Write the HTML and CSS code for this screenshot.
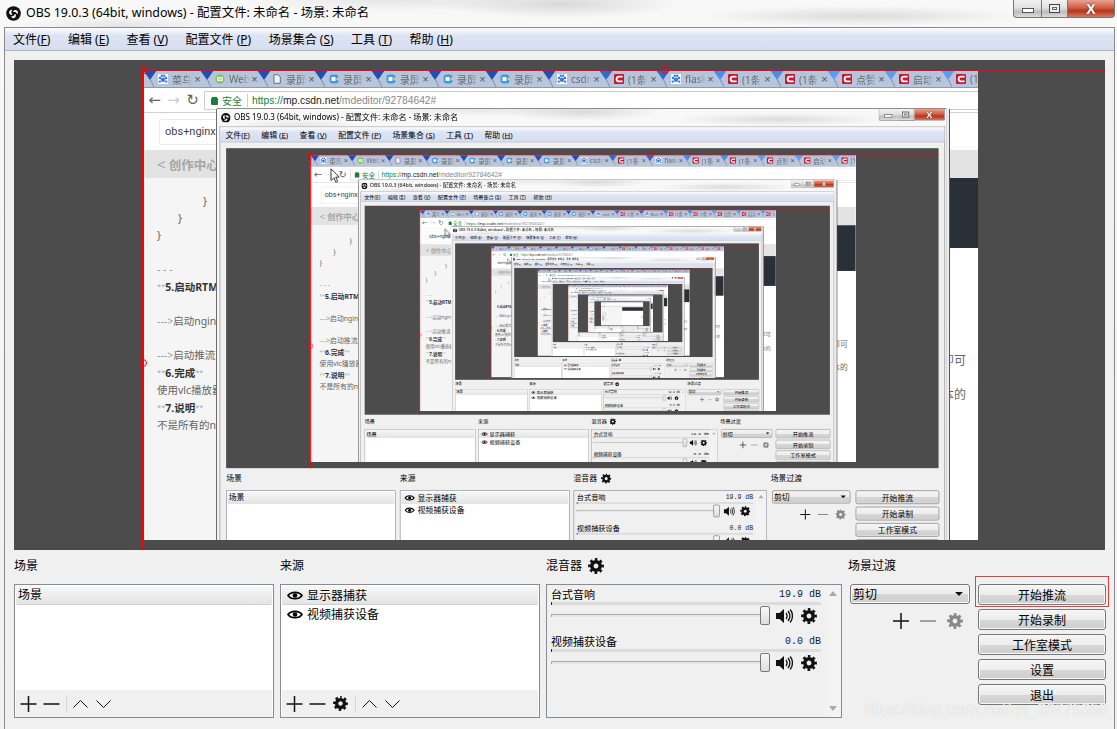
FILE: index.html
```html
<!DOCTYPE html>
<html lang="zh-CN">
<head>
<meta charset="utf-8">
<title>OBS 19.0.3</title>
<link rel="stylesheet" href="styles.css">
</head>
<body>
<svg class="defs" width="0" height="0" aria-hidden="true">
  <symbol id="i-gear" viewBox="-8 -8 16 16">
    <circle r="4.2" fill="none" stroke="currentColor" stroke-width="3.6"/>
    <circle r="6.6" fill="none" stroke="currentColor" stroke-width="2.6" stroke-dasharray="2.7 2.48" stroke-dashoffset="1.35" transform="rotate(-90)"/>
  </symbol>
  <symbol id="i-plus" viewBox="0 0 16 16"><path d="M8 0v16M0 8h16" stroke="currentColor" stroke-width="1.5" fill="none"/></symbol>
  <symbol id="i-minus" viewBox="0 0 16 16"><path d="M0 8h16" stroke="currentColor" stroke-width="1.5" fill="none"/></symbol>
  <symbol id="i-up" viewBox="0 0 16 10"><path d="M1 8.5 8 1.5l7 7" stroke="currentColor" stroke-width="1" fill="none"/></symbol>
  <symbol id="i-down" viewBox="0 0 16 10"><path d="M1 1.5l7 7 7-7" stroke="currentColor" stroke-width="1" fill="none"/></symbol>
  <symbol id="i-eye" viewBox="0 0 16 11">
    <path d="M1 5.5C4 1.2 12 1.2 15 5.5 12 9.8 4 9.8 1 5.5Z" fill="none" stroke="currentColor" stroke-width="1.7"/>
    <circle cx="8" cy="5.5" r="2.3" fill="currentColor"/>
  </symbol>
  <symbol id="i-speaker" viewBox="0 0 17 16">
    <path d="M0 5h3.5L8 1v14l-4.5-4H0Z" fill="currentColor"/>
    <path d="M10 5c1.3 1.8 1.3 4.2 0 6M12 3c2.3 3 2.3 7 0 10M14.2 1.5c3 3.8 3 9.2 0 13" fill="none" stroke="currentColor" stroke-width="1.3"/>
  </symbol>
  <symbol id="i-logo" viewBox="-8 -8 16 16">
    <circle r="7.8" fill="#111"/>
    <g fill="#fff">
      <path d="M-.6-1.6A2.7 2.7 0 1 1 4 .8 4 4 0 0 0-.6-1.6Z"/>
      <path d="M-.6-1.6A2.7 2.7 0 1 1 4 .8 4 4 0 0 0-.6-1.6Z" transform="rotate(120)"/>
      <path d="M-.6-1.6A2.7 2.7 0 1 1 4 .8 4 4 0 0 0-.6-1.6Z" transform="rotate(240)"/>
    </g>
  </symbol>
  <symbol id="f-paw" viewBox="0 0 10 10">
    <rect width="10" height="10" fill="#fff"/>
    <g fill="#3a7be0"><circle cx="5" cy="5.8" r="2.2"/><circle cx="2" cy="4" r="1.3"/><circle cx="8" cy="4" r="1.3"/><circle cx="3.8" cy="1.8" r="1.2"/><circle cx="6.2" cy="1.8" r="1.2"/><circle cx="1.8" cy="7.6" r="1.2"/><circle cx="8.2" cy="7.6" r="1.2"/></g>
  </symbol>
  <symbol id="f-web" viewBox="0 0 10 10">
    <circle cx="5" cy="5" r="4.6" fill="#7cc24a"/><rect x="2.2" y="2.8" width="5.6" height="4.4" fill="#fff"/><path d="M3 4.2h4M3 5.8h4" stroke="#7cc24a" stroke-width=".7"/>
  </symbol>
  <symbol id="f-doc" viewBox="0 0 10 10"><path d="M2 .7h4l2.3 2.4v6.2H2Z" fill="#eef2f8" stroke="#555" stroke-width=".8"/></symbol>
  <symbol id="f-rec" viewBox="0 0 10 10">
    <rect x=".5" y=".5" width="9" height="9" rx="3" fill="#3f9be8"/><path d="M2.5 3h4v4h-4Z" fill="#fff"/><path d="M7 5 9.6 3v4Z" fill="#ffd24a"/>
  </symbol>
  <symbol id="f-c" viewBox="0 0 10 10">
    <rect width="10" height="10" rx="1" fill="#c8182f"/><path d="M8.6 2.6H5A2.4 2.4 0 0 0 5 7.4h3.6" fill="none" stroke="#fff" stroke-width="1.9"/>
  </symbol>
</svg>

<div class="screen">
  <header class="titlebar">
    <svg class="logo"><use href="#i-logo"/></svg>
    <span class="title-text">OBS 19.0.3 (64bit, windows) - 配置文件: 未命名 - 场景: 未命名</span>
    <div class="controls">
      <span class="ctl ctl-min"><i class="glyph-min"></i></span>
      <span class="ctl ctl-max"><i class="glyph-max"></i></span>
      <span class="ctl ctl-close">X</span>
    </div>
  </header>
  <div class="window">
    <nav class="menubar">
      <span>文件(<u>F</u>)</span>
      <span>编辑 (<u>E</u>)</span>
      <span>查看 (<u>V</u>)</span>
      <span>配置文件 (<u>P</u>)</span>
      <span>场景集合 (<u>S</u>)</span>
      <span>工具 (<u>T</u>)</span>
      <span>帮助 (<u>H</u>)</span>
    </nav>
    <div class="body">
      <section class="preview">
        <div class="capture">
          <div class="capture-inner">
            <div class="tabs">
              <div class="tab"><svg class="fav"><use href="#f-paw"/></svg><span class="tab-title">菜鸟:</span><span class="tab-x">×</span></div>
              <div class="tab"><svg class="fav"><use href="#f-web"/></svg><span class="tab-title">Web</span><span class="tab-x">×</span></div>
              <div class="tab"><svg class="fav"><use href="#f-doc"/></svg><span class="tab-title">录屏</span><span class="tab-x">×</span></div>
              <div class="tab"><svg class="fav"><use href="#f-rec"/></svg><span class="tab-title">录屏</span><span class="tab-x">×</span></div>
              <div class="tab"><svg class="fav"><use href="#f-rec"/></svg><span class="tab-title">录屏</span><span class="tab-x">×</span></div>
              <div class="tab"><svg class="fav"><use href="#f-rec"/></svg><span class="tab-title">录屏</span><span class="tab-x">×</span></div>
              <div class="tab"><svg class="fav"><use href="#f-rec"/></svg><span class="tab-title">录屏</span><span class="tab-x">×</span></div>
              <div class="tab"><svg class="fav"><use href="#f-paw"/></svg><span class="tab-title">csdn</span><span class="tab-x">×</span></div>
              <div class="tab"><svg class="fav"><use href="#f-c"/></svg><span class="tab-title">(1条</span><span class="tab-x">×</span></div>
              <div class="tab"><svg class="fav"><use href="#f-paw"/></svg><span class="tab-title">flask</span><span class="tab-x">×</span></div>
              <div class="tab"><svg class="fav"><use href="#f-c"/></svg><span class="tab-title">(1条</span><span class="tab-x">×</span></div>
              <div class="tab"><svg class="fav"><use href="#f-c"/></svg><span class="tab-title">(1条</span><span class="tab-x">×</span></div>
              <div class="tab"><svg class="fav"><use href="#f-c"/></svg><span class="tab-title">点赞</span><span class="tab-x">×</span></div>
              <div class="tab"><svg class="fav"><use href="#f-c"/></svg><span class="tab-title">启动</span><span class="tab-x">×</span></div>
              <div class="tab"><svg class="fav"><use href="#f-c"/></svg><span class="tab-title">(1</span></div>
            </div>
            <div class="toolbar">
              <span class="nav-btn">←</span>
              <span class="nav-btn nav-off">→</span>
              <span class="nav-btn nav-reload">↻</span>
              <div class="address">
                <i class="lock"></i><span class="secure">安全</span><i class="addr-sep"></i>
                <span class="url"><span class="url-s">https://</span><span class="url-h">mp.csdn.net</span>/mdeditor/92784642#</span>
              </div>
            </div>
            <div class="title-row"><div class="title-input">obs+nginx</div></div>
            <div class="crumb"><span class="crumb-lt">&lt;</span> 创作中心</div>
            <div class="editor">
              <div class="md">
                <p class="i2">}</p>
                <p class="i1">}</p>
                <p>}</p>
                <p>&nbsp;</p>
                <p class="mute">- - -</p>
                <p><span class="stars">**</span><b>5.启动RTMP服务</b></p>
                <p>&nbsp;</p>
                <p><span class="mute">---&gt;</span>启动nginx服务</p>
                <p>&nbsp;</p>
                <p><span class="mute">---&gt;</span>启动推流</p>
                <p><span class="stars">**</span><b>6.完成</b><span class="stars">**</span></p>
                <p>使用vlc播放器打开</p>
                <p><span class="stars">**</span><b>7.说明</b><span class="stars">**</span></p>
                <p>不是所有的nginx版本</p>
              </div>
              <div class="render">
                <div class="code-block"></div>
                <p class="render-a">即可</p>
                <p class="render-b">本的</p>
              </div>
            </div>
            <div class="nest"></div>
          </div>
        </div>
        <i class="sel-top"></i>
        <i class="sel-left"></i>
        <i class="handle handle-tl"></i>
        <i class="handle handle-ml"></i>
        <i class="handle handle-tm"></i>
      </section>
      <section class="docks">
        <div class="dock dock-list">
          <h2 class="dock-label">场景</h2>
          <div class="box">
            <ul class="list"><li class="sel">场景</li></ul>
            <div class="list-tools">
              <svg class="tool"><use href="#i-plus"/></svg>
              <svg class="tool"><use href="#i-minus"/></svg>
              <i class="tool-sep"></i>
              <svg class="tool tool-ch"><use href="#i-up"/></svg>
              <svg class="tool tool-ch"><use href="#i-down"/></svg>
            </div>
          </div>
        </div>
        <div class="dock dock-list">
          <h2 class="dock-label">来源</h2>
          <div class="box">
            <ul class="list">
              <li class="sel src"><svg class="eye"><use href="#i-eye"/></svg>显示器捕获</li>
              <li class="src"><svg class="eye"><use href="#i-eye"/></svg>视频捕获设备</li>
            </ul>
            <div class="list-tools">
              <svg class="tool"><use href="#i-plus"/></svg>
              <svg class="tool"><use href="#i-minus"/></svg>
              <svg class="tool tool-gear"><use href="#i-gear"/></svg>
              <i class="tool-sep"></i>
              <svg class="tool tool-ch"><use href="#i-up"/></svg>
              <svg class="tool tool-ch"><use href="#i-down"/></svg>
            </div>
          </div>
        </div>
        <div class="dock dock-mixer">
          <h2 class="dock-label">混音器<svg class="label-gear"><use href="#i-gear"/></svg></h2>
          <div class="box mixer">
            <div class="tracks">
              <div class="track">
                <div class="track-head"><span>台式音响</span><span class="db">19.9 dB</span></div>
                <div class="meter"></div>
                <div class="track-ctl">
                  <div class="slider"><i class="slider-handle"></i></div>
                  <svg class="speaker"><use href="#i-speaker"/></svg>
                  <svg class="track-gear"><use href="#i-gear"/></svg>
                </div>
              </div>
              <div class="track">
                <div class="track-head"><span>视频捕获设备</span><span class="db">0.0 dB</span></div>
                <div class="meter"></div>
                <div class="track-ctl">
                  <div class="slider"><i class="slider-handle"></i></div>
                  <svg class="speaker"><use href="#i-speaker"/></svg>
                  <svg class="track-gear"><use href="#i-gear"/></svg>
                </div>
              </div>
            </div>
            <div class="vscroll"><i class="arrow-up"></i><i class="arrow-down"></i></div>
          </div>
        </div>
        <div class="dock dock-trans">
          <h2 class="dock-label">场景过渡</h2>
          <div class="combo"><span>剪切</span><i class="combo-arrow"></i></div>
          <div class="trans-tools">
            <svg class="t-icon"><use href="#i-plus"/></svg>
            <svg class="t-icon t-off"><use href="#i-minus"/></svg>
            <svg class="t-icon t-off"><use href="#i-gear"/></svg>
          </div>
        </div>
        <div class="actions">
          <button class="btn">开始推流</button>
          <button class="btn">开始录制</button>
          <button class="btn">工作室模式</button>
          <button class="btn">设置</button>
          <button class="btn">退出</button>
        </div>
      </section>
    </div>
  </div>
  <svg class="cursor" viewBox="0 0 12 18"><path d="M1 1v13l3.2-3 2.2 5 2-1-2.2-4.8H10Z" fill="#fff" stroke="#222" stroke-width="1"/></svg>
</div>
<div class="annot-box"></div>
<div class="watermark">https://blog.csdn.net/qq_26775359</div>
<script src="app.js"></script>
</body>
</html>
```

FILE: styles.css
```css
* { box-sizing: border-box; }
html, body { margin: 0; padding: 0; }
body {
  width: 1117px; height: 729px; overflow: hidden; position: relative;
  font-family: "Noto Sans", "Noto Sans CJK SC", sans-serif;
  font-size: 12px; color: #000;
}
.defs { position: absolute; }
ul, p, h2 { margin: 0; padding: 0; font: inherit; list-style: none; }
i { display: block; font-style: normal; }

/* one captured desktop: the page itself, and every level of the mirror */
.screen {
  position: relative; width: 1117px; height: 729px; overflow: hidden;
  display: flex; flex-direction: column;
  background:
    radial-gradient(ellipse 120px 14px at 560px 4px, #d9d9d9, transparent),
    radial-gradient(ellipse 160px 10px at 860px 16px, #dcdcdc, transparent),
    radial-gradient(ellipse 100px 10px at 120px 26px, #e4e4e4, transparent),
    radial-gradient(ellipse 170px 12px at 400px 0, #e6e6e6, transparent),
    linear-gradient(#f8f8f8, #f1f1f1);
}
.screen .screen {
  position: absolute; left: 74px; top: 39px;
  transform-origin: 0 0; transform: scale(.653);
  overflow: visible;
  box-shadow: -1.5px 0 0 #6a6a6a, 0 -1.5px 0 #8a8a8a, 4px 0 0 #ececec, 5.5px 0 0 #555;
}

.titlebar { height: 27px; flex: none; display: flex; align-items: flex-start; position: relative; }
.logo { width: 15px; height: 15px; margin: 6px 5px 0 6px; flex: none; }
.title-text { line-height: 26px; font-size: 12.4px; white-space: nowrap; }
.controls { margin-left: auto; margin-right: 2px; display: flex; height: 18px; }
.ctl {
  height: 18px; display: flex; align-items: center; justify-content: center;
  border: 1px solid #777; border-top: none; border-left: none;
  background: linear-gradient(#f2f2f2, #e2e2e2 45%, #bdbdbd 70%, #dcdcdc);
}
.ctl-min { width: 29px; border-left: 1px solid #777; border-bottom-left-radius: 4px; }
.ctl-max { width: 26px; }
.ctl-close {
  width: 47px; border-bottom-right-radius: 4px;
  background: linear-gradient(#e9a392, #cf5f45 45%, #b8331c 65%, #d87a5e);
  color: #fff; font: bold 14px "Liberation Sans", sans-serif;
  text-shadow: 0 0 2px #333;
}
.glyph-min { width: 12px; height: 5px; border: 1px solid #555; background: #fff; margin-top: 3px; }
.glyph-max { width: 11px; height: 9px; border: 1px solid #444; background: #e8e8e8; box-shadow: inset 0 0 0 2px #eee, inset 0 0 0 3px #666; }

.window {
  flex: 1; min-height: 0; margin: 0 2px 0 4px;
  border: 1px solid #8a8a8a; border-bottom: none;
  background: #f0f0f0; display: flex; flex-direction: column;
}
.menubar {
  height: 23px; flex: none; display: flex; align-items: center; gap: 17.5px; padding: 0 0 0 8px;
  background: linear-gradient(#fdfdff, #dde3f2 35%, #d7def0);
  border-bottom: 1px solid #aab2c8;
  white-space: nowrap;
}
.body { flex: 1; min-height: 0; padding: 9px 9px 0; display: flex; flex-direction: column; }

/* preview canvas */
.preview { height: 490px; flex: none; position: relative; background: #4c4c4c; }
.capture { position: absolute; left: 129px; top: 10px; width: 835px; height: 470px; overflow: hidden; }
.capture-inner {
  position: relative; width: 835px; height: 470px; background: #fff;
  display: flex; flex-direction: column; filter: blur(.6px);
}
.nest { position: absolute; left: 0; top: 0; }
.sel-top { position: absolute; left: 129px; right: 0; top: 10px; height: 1px; background: #f00; }
.sel-left { position: absolute; left: 128px; top: 10px; bottom: 0; width: 2px; background: #f00; }
.handle {
  position: absolute; width: 8px; height: 8px; margin: -4px 0 0 -4px;
  border: 1px solid #f00; border-radius: 50%;
}
.handle-tl { left: 129px; top: 10px; border-radius: 2px; }
.handle-ml { left: 129px; top: 303px; }
.handle-tm { left: 651px; top: 10px; }

/* captured browser */
.tabs {
  height: 18px; flex: none; display: flex; padding-left: 7px; overflow: hidden;
  background: linear-gradient(#b4c4dc, #b9c7dc);
  border-top: 1px solid #7f9cc8; border-bottom: 1px solid #8a9ab5;
  position: relative;
}
.tab {
  width: 57px; flex: none; position: relative; display: flex; align-items: center;
  padding-left: 8px; color: #6a6a6a; font-size: 10px; white-space: nowrap;
}
.tab::before {
  content: ""; position: absolute; left: -7px; top: -1px;
  border-left: 7px solid transparent; border-right: 7px solid transparent;
  border-top: 10px solid #1f4fb5;
}
.tab::after {
  content: ""; position: absolute; left: 2px; top: 8px; width: 1px; height: 10px;
  background: #8494b0; transform: rotate(-25deg);
}
.tab:nth-child(n+9)::before { border-top-color: #2e6ad0; }
.tab:nth-child(n+11)::before { border-top-color: #4a8cea; }
.tab:nth-child(n+13)::before { border-top-color: #5a9ef2; }
.fav { width: 10px; height: 10px; flex: none; margin-right: 4px; }
.tab-title {
  width: 21px; overflow: hidden;
  -webkit-mask-image: linear-gradient(90deg, #000 60%, transparent);
  mask-image: linear-gradient(90deg, #000 60%, transparent);
}
.tab-x { width: 9px; text-align: center; font: 11px "Liberation Sans", sans-serif; color: #555; }

.toolbar { height: 25px; flex: none; display: flex; align-items: center; padding-left: 2px; border-bottom: 1px solid #d0d0d0; background: #fff; }
.nav-btn { width: 19px; text-align: center; color: #666; font: 15px "DejaVu Sans", sans-serif; line-height: 1; }
.nav-off { color: #ccc; }
.address {
  flex: 1; height: 19px; margin: 0 0 0 2px; display: flex; align-items: center;
  border: 1px solid #ccc; border-right: none; border-radius: 2px 0 0 2px; padding-left: 6px;
}
.lock { width: 7px; height: 7px; background: #188038; border-radius: 1px; margin-top: 2px; box-shadow: 0 -2px 0 -1px #188038; }
.secure { color: #188038; margin-left: 4px; font-size: 10px; }
.addr-sep { width: 1px; height: 13px; background: #ccc; margin: 0 4px 0 5px; }
.url { font: 10.3px "Liberation Sans", sans-serif; color: #888; white-space: nowrap; }
.url-s { color: #188038; }
.url-h { color: #222; }

.title-row { height: 37px; flex: none; padding: 6px 0 0 16px; background: #fff; }
.title-input {
  width: 500px; height: 26px; padding-left: 5px;
  border: 1px solid #eaeaea; border-radius: 3px; font: 11px/24px "Roboto", sans-serif; color: #444;
}
.crumb { height: 28px; flex: none; line-height: 28px; padding-left: 14px; background: #e3e3e3; color: #a5a5a5; font-weight: bold; font-size: 12.5px; }
.crumb-lt { font-size: 15px; font-weight: normal; }
.editor { flex: 1; min-height: 0; display: flex; }
.md { width: 420px; flex: none; padding: 15px 0 0 14px; background: #f5f5f5; color: #666; font-size: 10.5px; line-height: 17px; white-space: nowrap; overflow: hidden; }
.md b { color: #333; }
.md .mute { color: #999; }
.md .stars { color: #aaa; font-size: 7.5px; vertical-align: 2px; }
.i1 { padding-left: 21px; }
.i2 { padding-left: 46px; }
.render { flex: 1; background: #fff; color: #666; text-align: right; padding-right: 12px; font-size: 12px; line-height: 17px; }
.code-block { height: 70px; margin-right: -12px; background: #2b2f38; }
.render-a { margin-top: 104px; }
.render-b { margin-top: 17px; }
.cursor { display: none; }
.screen .screen > .cursor { display: block; position: absolute; left: 173px; top: 90px; width: 17px; height: 25px; }
.screen .screen .screen > .cursor { left: 201px; top: 113px; }

/* docks */
.docks { flex: 1; min-height: 0; display: flex; padding-top: 8px; }
.dock { display: flex; flex-direction: column; flex: none; }
.dock-list { width: 260px; margin-right: 6px; }
.dock-mixer { width: 296px; margin-right: 6px; }
.dock-trans { width: 122px; margin-right: 8px; }
.dock-label { height: 16px; margin-bottom: 10px; line-height: 16px; display: flex; align-items: center; font-weight: normal; }
.label-gear { width: 16px; height: 16px; margin-left: 6px; color: #111; }
.box { height: 134px; border: 1px solid #878c94; display: flex; flex-direction: column; background: #fff; }
.list { flex: 1; min-height: 0; padding: 1px 1px 0; }
.list li { height: 19px; line-height: 17px; padding-left: 2px; }
.list li.sel { background: linear-gradient(#f7f7f7, #e4e4e4); border-bottom: 1px solid #cfcfcf; border-radius: 2px; }
.list li.src { display: flex; align-items: center; padding-left: 5px; }
.list li.src > .eye { margin-right: 4px; }
.eye { width: 16px; height: 11px; }
.list-tools { height: 27px; flex: none; display: flex; align-items: center; background: #f0f0f0; padding-left: 1px; margin: 0 1px 0; }
.tool { width: 23px; height: 16px; flex: none; color: #111; }
.tool-gear { height: 15px; }
.tool-ch { height: 10px; }
.tool-sep { width: 1px; height: 18px; background: #d6d6d6; margin: 0 2px 0 3px; }

.mixer { flex-direction: row; background: #f0f0f0; }
.tracks { flex: 1; padding: 1px 0 0 4px; min-width: 0; }
.track { width: 270px; margin-bottom: 7px; }
.track-head { height: 16px; display: flex; justify-content: space-between; align-items: center; font-size: 11px; }
.db { font: 10px "Liberation Mono", monospace; color: #123; }
.meter { height: 3px; background: #dcdcdc; border-left: 1px solid #222; }
.track-ctl { height: 21px; display: flex; align-items: center; }
.slider {
  width: 219px; height: 3px; flex: none; background: #e6e6e6; border: 1px solid #aaa; border-width: 1px 0 0 1px;
  margin-right: 6px; position: relative;
}
.slider-handle {
  position: absolute; right: 0; top: -9px; width: 10px; height: 19px;
  border: 1px solid #777; border-radius: 2px; background: linear-gradient(#f8f8f8, #dcdcdc);
}
.speaker { width: 17px; height: 16px; margin-right: 8px; color: #111; flex: none; }
.track-gear { width: 16px; height: 16px; color: #111; flex: none; }
.vscroll { width: 16px; flex: none; background: #f3f3f3; position: relative; display: flex; flex-direction: column; justify-content: space-between; align-items: center; padding: 6px 0; }
.arrow-up { border: 4px solid transparent; border-bottom: 5px solid #aaa; border-top: none; }
.arrow-down { border: 4px solid transparent; border-top: 5px solid #aaa; border-bottom: none; }

.combo {
  width: 120px; height: 20px; margin-left: 2px; display: flex; align-items: center; justify-content: space-between;
  padding: 0 6px 0 2px; border: 1px solid #777; border-radius: 3px;
  background: linear-gradient(#f4f4f4, #ececec 50%, #d6d6d6 52%, #cfcfcf);
  box-shadow: inset 0 0 0 1px #fafafa;
}
.combo-arrow { border: 4px solid transparent; border-top: 4px solid #111; border-bottom: none; }
.trans-tools { height: 27px; margin-top: 3px; display: flex; justify-content: flex-end; align-items: center; padding-right: 7px; }
.t-icon { width: 16px; height: 16px; margin-left: 11px; color: #111; }
.t-off { color: #888; }

.actions { width: 128px; flex: none; padding-top: 26px; display: flex; flex-direction: column; gap: 4px; }
.btn {
  height: 21px; padding: 0; font: inherit; color: #000;
  border: 1px solid #777; border-radius: 3px;
  background: linear-gradient(#f5f5f5, #ededed 50%, #d8d8d8 52%, #cdcdcd);
  box-shadow: inset 0 0 0 1px #f8f8f8;
}

/* marks added on top of the finished screenshot */
.annot-box { position: absolute; left: 975px; top: 576px; width: 134px; height: 31px; border: 1px solid #f03a3a; }
.watermark {
  position: absolute; left: 864px; top: 701px; white-space: nowrap;
  font: 15.9px "Liberation Sans", sans-serif; color: rgba(255,255,255,.85);
  text-shadow: 0 0 1px #bbb;
}
```

FILE: app.js
```js
// The preview shows the desktop it is part of: repeat the screen inside itself.
var DEPTH = 7;
var root = document.querySelector('.screen');
var pristine = root.cloneNode(true);
var host = root;
for (var level = 0; level < DEPTH; level++) {
  var copy = pristine.cloneNode(true);
  host.querySelector('.nest').appendChild(copy);
  host = copy;
}
```
